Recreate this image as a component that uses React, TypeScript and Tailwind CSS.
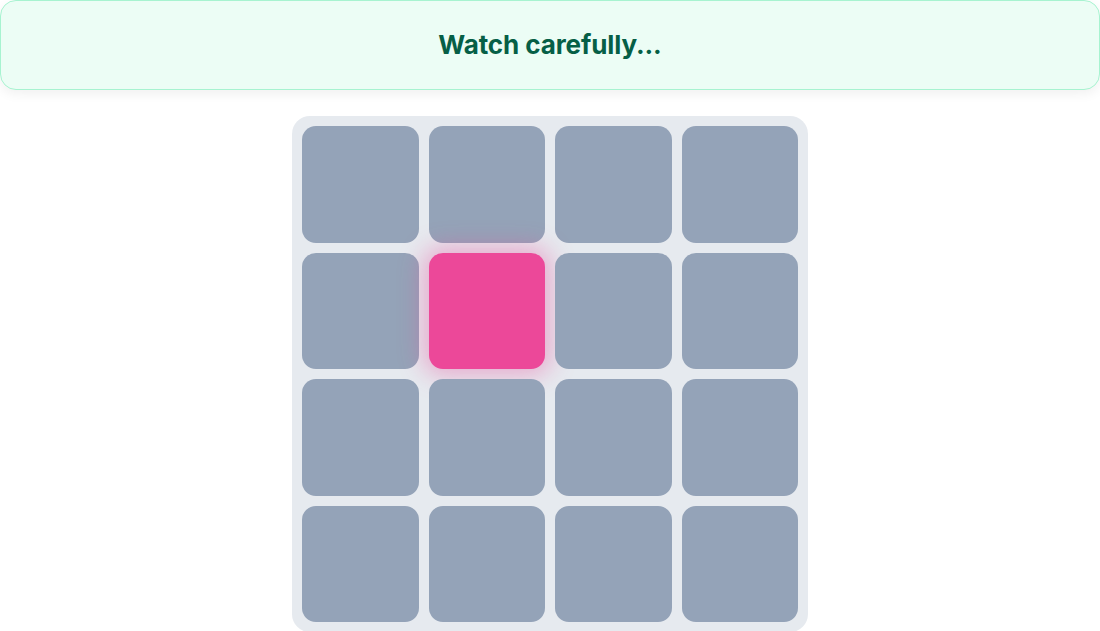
export default function App() {
  const active = 5;
  return (
    <div className="w-[1100px] h-[631px] overflow-hidden bg-white" style={{ fontFamily: "Inter, 'Noto Sans', sans-serif" }}>
      <div className="w-full h-[90px] flex items-center justify-center rounded-2xl border border-[#a7f3d0] bg-[#ecfdf5] shadow-[0_4px_12px_rgba(0,0,0,0.06)]">
        <h1 className="text-[26px] leading-8 font-bold text-[#065f46] tracking-[-0.1px]">Watch carefully...</h1>
      </div>
      <div className="mt-[26px] flex justify-center">
        <div className="w-[516px] h-[516px] rounded-[18px] bg-[#e6eaef] p-[10px] grid grid-cols-4 grid-rows-4 gap-[10px]">
          {Array.from({ length: 16 }).map((_, i) => (
            <div
              key={i}
              className={
                i === active
                  ? "rounded-[14px] bg-[#ec4899] shadow-[0_0_24px_6px_rgba(236,72,153,0.4)]"
                  : "rounded-[14px] bg-[#94a3b8]"
              }
            />
          ))}
        </div>
      </div>
    </div>
  );
}
